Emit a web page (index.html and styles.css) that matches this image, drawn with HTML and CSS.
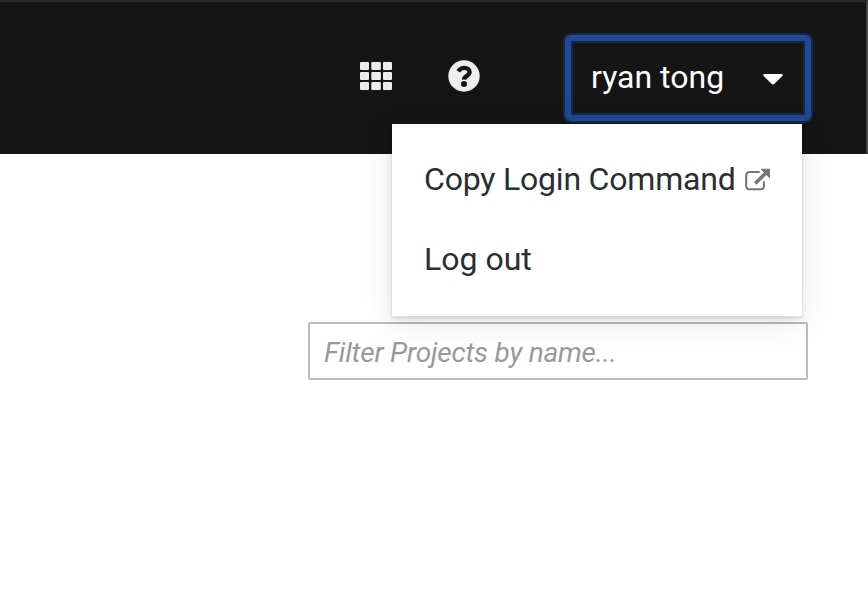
FILE: index.html
```html
<!DOCTYPE html>
<html lang="en">
<head>
<meta charset="utf-8">
<title>Projects</title>
<link rel="stylesheet" href="styles.css">
</head>
<body>
<header class="masthead">
  <nav class="tools">
    <svg class="grid-icon" width="32" height="28" viewBox="0 0 32 28" fill="#ededed">
      <rect width="9" height="8" rx="1"/><rect x="11.3" width="9.6" height="8" rx="1"/><rect x="23" width="9" height="8" rx="1"/>
      <rect y="10" width="9" height="8" rx="1"/><rect x="11.3" y="10" width="9.6" height="8" rx="1"/><rect x="23" y="10" width="9" height="8" rx="1"/>
      <rect y="20" width="9" height="8" rx="1"/><rect x="11.3" y="20" width="9.6" height="8" rx="1"/><rect x="23" y="20" width="9" height="8" rx="1"/>
    </svg>
    <svg class="help-icon" width="32" height="32" viewBox="0 0 32 32">
      <circle cx="16" cy="16" r="15.7" fill="#ededed"/>
      <path d="M10.3 11.4C11.8 8.9 13.6 7.9 16.2 7.9C19.4 7.9 21.6 9.6 21.6 12.1C21.6 15.8 16.2 15.8 16 19.6" fill="none" stroke="#151515" stroke-width="4.4"/>
      <circle cx="16" cy="24" r="3" fill="#151515"/>
    </svg>
  </nav>
  <div class="user">
    <button class="user-toggle" type="button">
      <span class="user-name">ryan tong</span>
      <svg class="caret" width="20" height="12" viewBox="0 0 20 12"><path d="M1.3 0H18.7Q20.5 .4 19.3 2L11.5 9.7Q10 11.2 8.5 9.7L.7 2Q-.5 .4 1.3 0Z" fill="#fff"/></svg>
    </button>
    <div class="menu">
      <a class="menu-item"><span class="copy-label">Copy Login Command</span>
        <svg class="external-icon" width="26" height="24" viewBox="0 0 26 24" fill="none" stroke="#72767b">
          <path d="M15 3.9H5Q1.2 3.9 1.2 7.5V18Q1.2 21.5 5 21.5H15.5Q19.3 21.5 19.3 18V13.5" stroke-width="2.1"/>
          <path d="M10.5 15.5L21 5" stroke-width="3.6"/>
          <path d="M16.6 1H25V9.6Z" fill="#72767b" stroke="#72767b" stroke-width="1" stroke-linejoin="round"/>
        </svg>
      </a>
      <a class="menu-item"><span class="logout-label">Log out</span></a>
    </div>
  </div>
</header>
<main class="content">
  <input class="filter" type="text" placeholder="Filter Projects by name...">
</main>
</body>
</html>
```
FILE: styles.css
```css
* { box-sizing: border-box; }
body {
  margin: 0;
  height: 600px;
  overflow: hidden;
  background: #fff;
  font-family: Roboto, "Liberation Sans", sans-serif;
}
.masthead {
  display: flex;
  justify-content: flex-end;
  height: 154px;
  padding: 34px 54px 0 0;
  background: #151515;
  border-top: 2px solid #292929;
  border-right: 2px solid #444;
}
.tools {
  display: flex;
  align-items: center;
  gap: 56px;
  height: 80px;
  margin-right: 84px;
}
.user { position: relative; width: 248px; }
.user-toggle {
  display: flex;
  align-items: center;
  justify-content: space-between;
  width: 246px;
  height: 86px;
  margin: -1px 1px;
  padding: 0 22px 0 20px;
  border: 6px solid #1f4899;
  border-radius: 6px;
  background: #151515;
  color: #fff;
  font: 32px/40px Roboto, "Liberation Sans", sans-serif;
  outline: 0;
  box-shadow: 0 0 0 2px #1a2844, inset 0 0 0 2px #1a2844;
}
.user-name { margin-top: -2px; white-space: nowrap; }
.caret { margin-top: 3px; }
.menu {
  position: absolute;
  top: 88px;
  right: 10px;
  z-index: 2;
  width: 410px;
  height: 192px;
  padding: 15px 32px;
  background: #fff;
  box-shadow: 0 2px 1px 1px rgba(3, 3, 3, .05), 0 4px 8px rgba(3, 3, 3, .06), 0 6px 30px rgba(3, 3, 3, .1);
}
.menu-item {
  display: flex;
  align-items: center;
  height: 80px;
  color: #292e34;
  font-size: 32px;
  white-space: nowrap;
}
.copy-label { width: 312px; letter-spacing: -.2px; }
.logout-label { letter-spacing: 0; }
.external-icon { margin: 2px 0 0 9px; }
.content { display: flex; justify-content: flex-end; padding: 168px 60px 0 0; }
.filter {
  width: 500px;
  height: 58px;
  padding: 2px 14px 0;
  border: 2px solid #bbb;
  border-radius: 2px;
  background: #fff;
  font: 28px/40px Roboto, "Liberation Sans", sans-serif;
  letter-spacing: -.22px;
}
.filter::placeholder { color: #999; font-style: italic; opacity: 1; }
```
